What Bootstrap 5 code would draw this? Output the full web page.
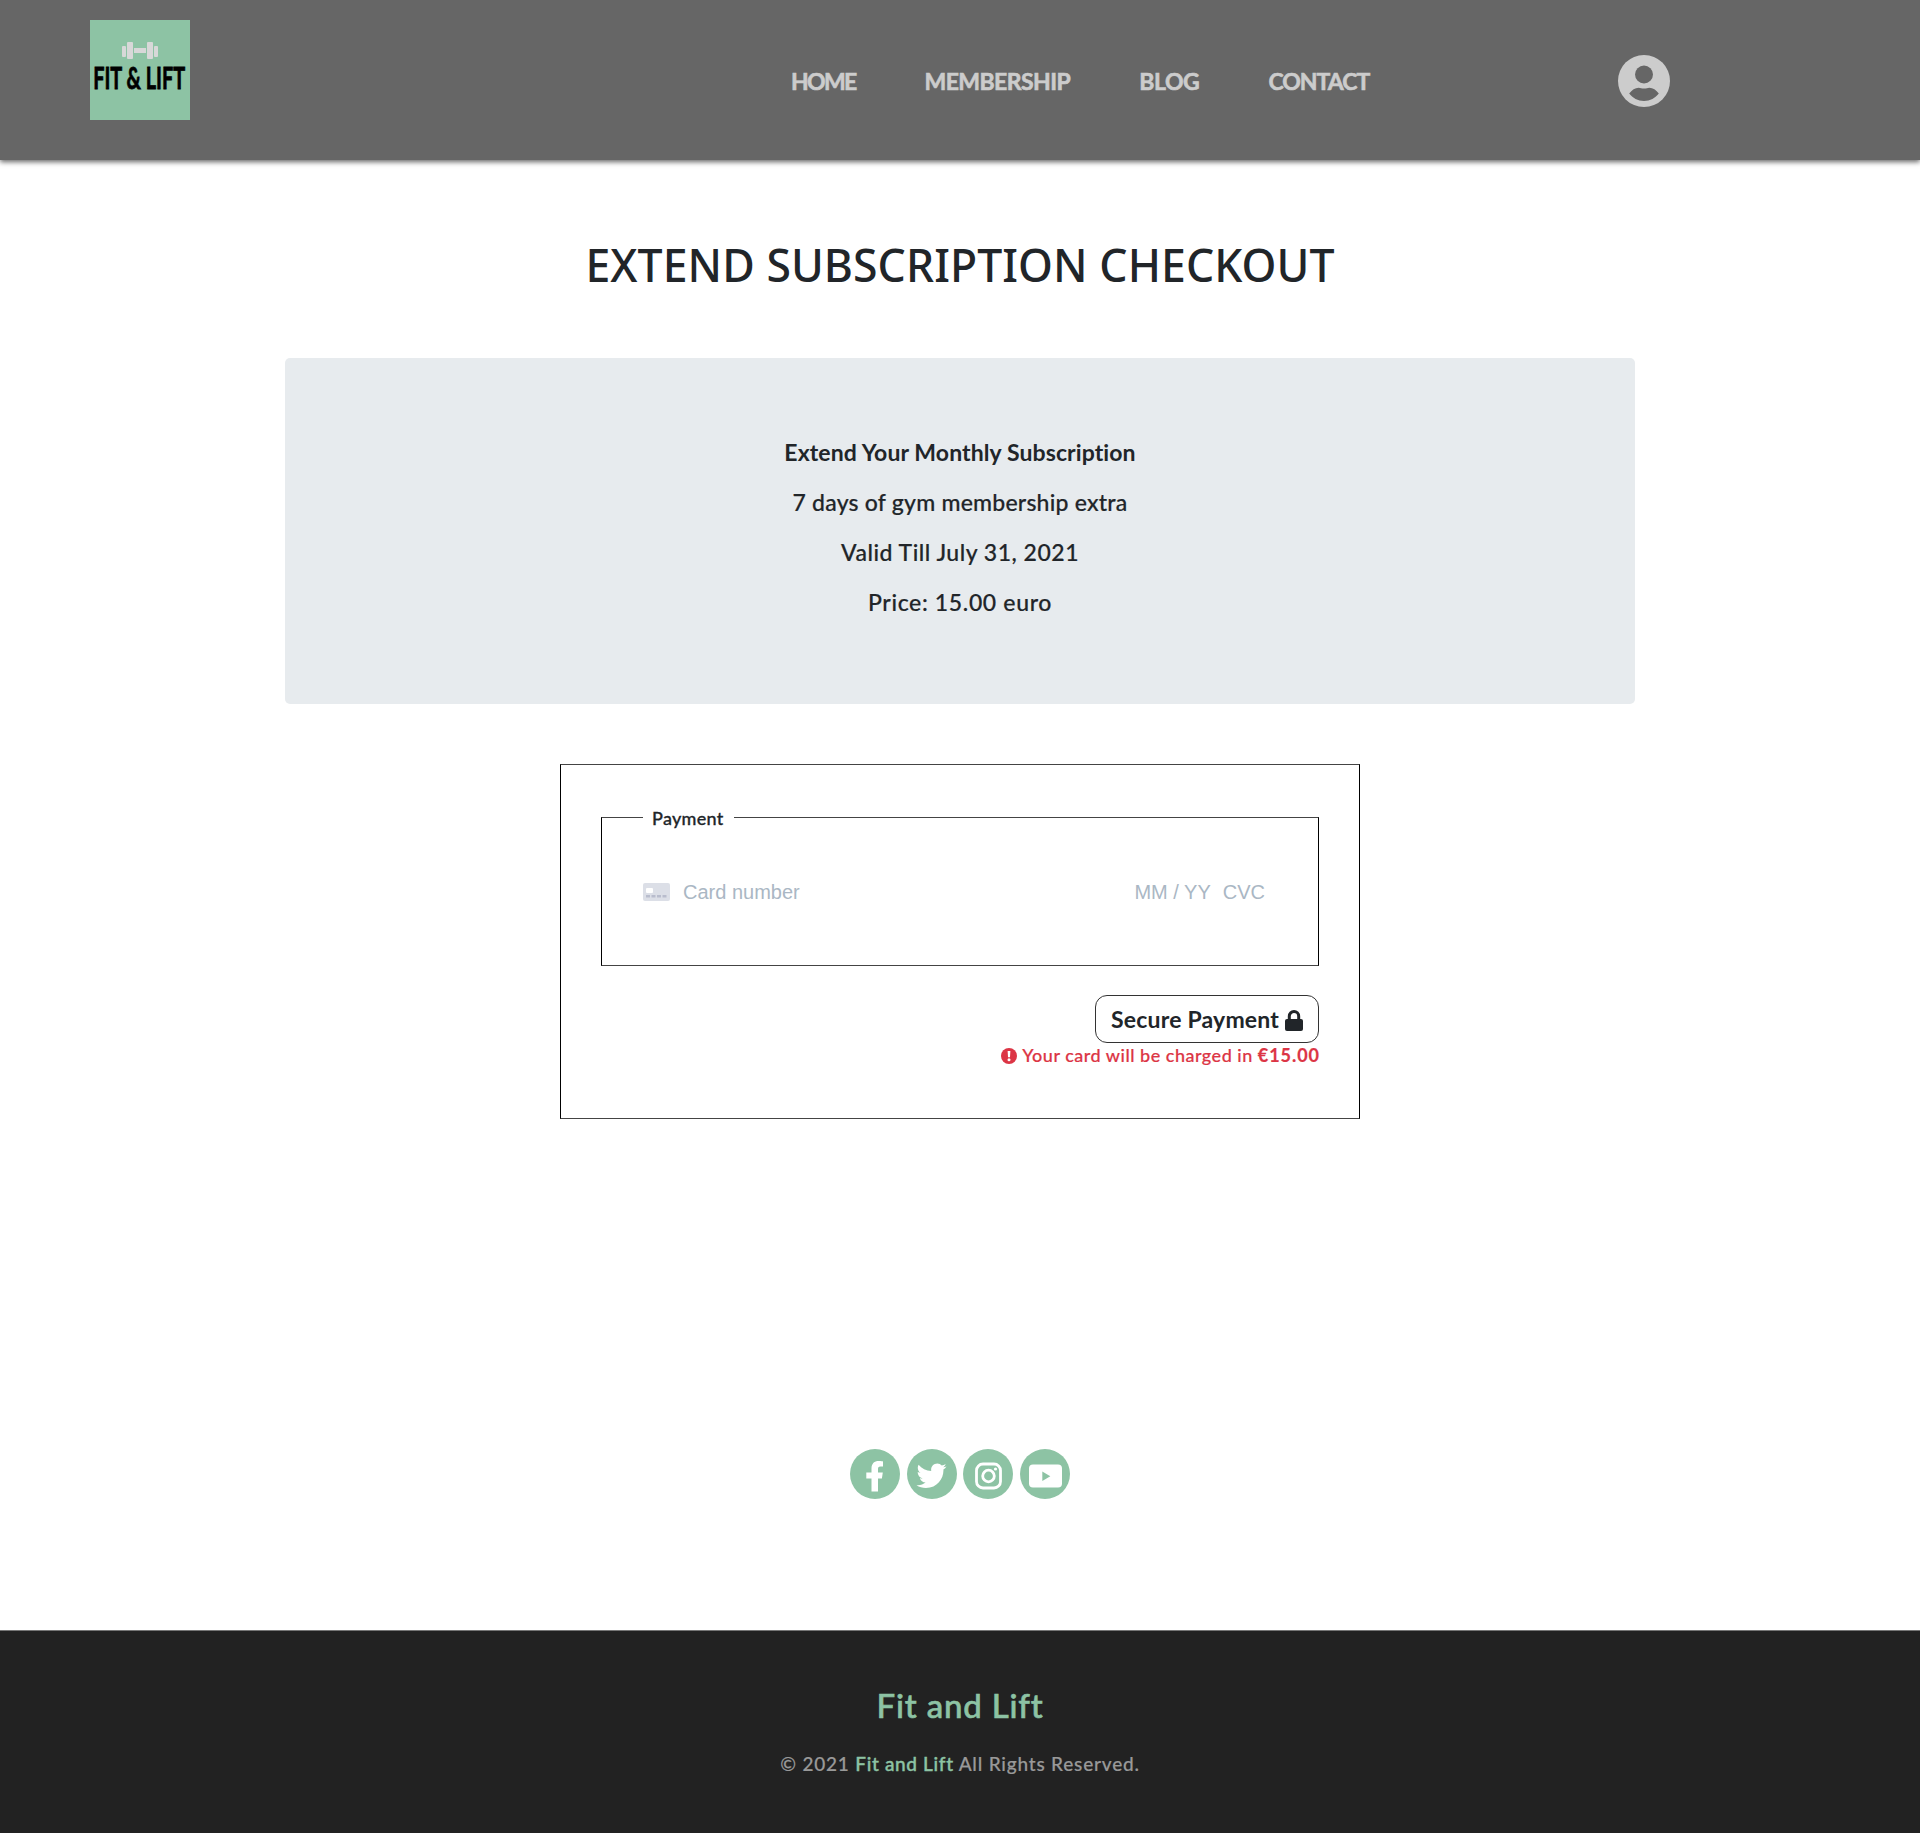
<!DOCTYPE html>
<html lang="en">
<head>
<meta charset="utf-8">
<meta name="viewport" content="width=device-width, initial-scale=1">
<title>Fit and Lift - Checkout</title>
<link rel="stylesheet" href="https://cdn.jsdelivr.net/npm/bootstrap@5.3.0/dist/css/bootstrap.min.css">
<style>
body{font-family:Lato,"Noto Sans",sans-serif;font-weight:500;color:#212529;background:#fff}
.site-header{height:160px;background:#666;box-shadow:0 2px 5px rgba(0,0,0,.6);padding-left:90px}
.site-logo{width:100px;height:100px;margin-top:20px}
.site-nav{margin-left:601px;gap:69px;padding-top:1px;font-size:23px;line-height:30px;font-weight:700;-webkit-text-stroke:.6px #ccc}
.site-nav a{color:#ccc;text-decoration:none;white-space:nowrap}
.nav-home{letter-spacing:-1.7px}.nav-member{letter-spacing:-.55px}.nav-blog{letter-spacing:-.4px}.nav-contact{letter-spacing:-1px}
.user-link{margin-left:180px;line-height:0}
.page-title{font:500 44.5px/53px "Noto Sans",sans-serif;letter-spacing:.08px;margin:78px 0 67px}
.summary{width:1350px;height:346px;padding-top:69px;background:#e7ebee;border-radius:5px;font-size:23px}
.summary p{line-height:50px;margin:0}
.summary p+p{-webkit-text-stroke:.2px #212529}
.sp-1{letter-spacing:.1px}.sp-2{letter-spacing:.22px}.sp-3{letter-spacing:.5px}.sp-4{letter-spacing:.65px}
.pay-form{width:800px;height:355px;margin-top:60px;padding:39px 40px 0;border:1px solid #000;border-top-color:#444;border-bottom-color:#444}
.pay-set{height:162px;padding:0 53px 0 41px;border:1px solid #000;border-top-color:#444;border-bottom-color:#444}
.pay-set legend{float:none;width:91px;height:26px;padding:2px 0 0 9px;margin:0;font-size:18px;line-height:24px;letter-spacing:.3px;white-space:nowrap;-webkit-text-stroke:.3px #212529}
.card-line{padding-top:50px;font:400 20px/24px "Liberation Sans",Arial,sans-serif;color:#aab7c4}
.card-label{margin-left:13px}
.pay-btn{width:224px;height:48px;margin-top:29px;padding:0 0 0 15px;border:1px solid #333;border-radius:12px;background:#fff;color:#212529;font-size:23px;font-weight:700;letter-spacing:.2px;line-height:46px;text-align:left}
.pay-btn svg{display:inline-block;vertical-align:-3px}
.charge-note{color:#dc3545;font-size:18px;line-height:24px;letter-spacing:.5px;-webkit-text-stroke:.2px #dc3545}
.charge-note svg{vertical-align:-2px;margin-right:1px}
.charge-note strong{letter-spacing:.95px;margin-right:-1px;font-weight:700}
.socials{margin-top:330px;gap:6.600px}
.site-footer{margin-top:131px;height:203px;padding-top:54px;background:#222;border-top:1px solid #777;color:#999}
.brand-name{font-size:33px;line-height:40px;font-weight:500;letter-spacing:.8px;color:#8dc3a4;-webkit-text-stroke:.6px #8dc3a4}
.rights{font-size:19px;line-height:24px;margin-top:27px;letter-spacing:.8px;-webkit-text-stroke:.2px}
.rights b{font-weight:500;color:#8dc3a4;letter-spacing:.65px;-webkit-text-stroke:.4px}
</style>
</head>
<body>
<header class="site-header d-flex align-items-start">
  <a href="#" class="site-logo d-block"><svg class="d-block overflow-visible" width="100" height="100" viewBox="0 0 100 100">
    <path fill="#8dc3a4" d="M0 0h100v100H0z"/>
    <g fill="#d8d8d8"><rect x="32" y="26" width="4" height="11" rx="1"/><rect x="37" y="22" width="6" height="17" rx="1"/><rect x="44" y="28" width="12" height="5"/><rect x="57" y="22" width="6" height="17" rx="1"/><rect x="64" y="26" width="4" height="11" rx="1"/></g>
    <text transform="translate(3.200 68.500) scale(.642 1)" font-family="Lato" font-weight="700" font-size="31" fill="#000" stroke="#000" stroke-width=".8">FIT &amp; LIFT</text>
  </svg></a>
  <nav class="site-nav d-flex align-items-center align-self-center">
    <a href="#" class="nav-home">HOME</a><a href="#" class="nav-member">MEMBERSHIP</a><a href="#" class="nav-blog">BLOG</a><a href="#" class="nav-contact">CONTACT</a>
    <a href="#" class="user-link" aria-label="Account"><svg width="52" height="52" viewBox="0 0 52 52"><circle cx="26" cy="26" r="26" fill="#ccc"/><circle cx="26" cy="19.500" r="9" fill="#666"/><path fill="#666" d="M11.200 38.500c2.500-3.600 6-5.800 9.500-5.800 1.800 0 2.800.9 5.300.9s3.500-.9 5.300-.9c3.500 0 7 2.200 9.500 5.800C37.500 43 32 46 26 46s-11.500-3-14.800-7.500z"/></svg></a>
  </nav>
</header>
<main class="d-flex flex-column align-items-center">
  <h1 class="page-title text-center">EXTEND SUBSCRIPTION CHECKOUT</h1>
  <section class="summary text-center">
    <p class="fw-bold sp-1">Extend Your Monthly Subscription</p>
    <p class="sp-2">7 days of gym membership extra</p>
    <p class="sp-3">Valid Till July 31, 2021</p>
    <p class="sp-4">Price: 15.00 euro</p>
  </section>
  <form class="pay-form d-flex flex-column">
    <fieldset class="pay-set">
      <legend>Payment</legend>
      <div class="card-line d-flex align-items-center">
        <svg width="27" height="18" viewBox="0 0 27 18"><rect width="27" height="18" rx="2" fill="#dcdfe7"/><rect x="3" y="5" width="7" height="5" rx="1" fill="#fff"/><path stroke="#b9bdcd" stroke-width="2.500" stroke-dasharray="4 1.500" d="M3 13.300h21.500"/></svg>
        <span class="card-label">Card number</span>
        <span class="ms-auto">MM / YY</span><span class="ms-2 ps-1">CVC</span>
      </div>
    </fieldset>
    <button type="button" class="pay-btn align-self-end">Secure Payment <svg width="18" height="21" viewBox="0 0 18 21"><rect y="9" width="18" height="12" rx="2" fill="#212529"/><path fill="none" stroke="#212529" stroke-width="3" d="M4.300 10V6.200a4.700 4.700 0 0 1 9.400 0V10"/></svg></button>
    <div class="charge-note align-self-end text-nowrap"><svg width="16" height="16" viewBox="0 0 16 16"><circle cx="8" cy="8" r="8" fill="#dc3545"/><path fill="#fff" d="M6.600 3h2.800L9 9.200H7z"/><circle cx="8" cy="11.700" r="1.500" fill="#fff"/></svg> Your card will be charged in <strong>€15.00</strong></div>
  </form>
  <div class="socials d-flex">
    <svg width="50" height="50" viewBox="0 0 50 50"><circle cx="25" cy="25" r="25" fill="#8dc3a4"/><path fill="#fff" d="M21.500 42.500V29.500H16.300V23.500h5.200v-4.200c0-4.800 2.900-7.300 7.200-7.300 2 0 4.300.4 4.300.4v5.100h-2.500c-2.200 0-2.500 1.300-2.500 2.600v3.400h4.800l-.9 6h-3.900v13z"/></svg>
    <svg width="50" height="50" viewBox="0 0 50 50"><circle cx="25" cy="25" r="25" fill="#8dc3a4"/><path fill="#fff" transform="translate(9.500 11.700) scale(.0586)" d="M459.370 151.716c.325 4.548.325 9.097.325 13.645 0 138.720-105.583 298.558-298.558 298.558-59.452 0-114.680-17.219-161.137-47.106 8.447.974 16.568 1.299 25.340 1.299 49.055 0 94.213-16.568 130.274-44.832-46.132-.975-84.792-31.188-98.112-72.772 6.498.974 12.995 1.624 19.818 1.624 9.421 0 18.843-1.300 27.614-3.573-48.081-9.747-84.143-51.980-84.143-102.985v-1.299c13.969 7.797 30.214 12.670 47.431 13.319-28.264-18.843-46.781-51.005-46.781-87.391 0-19.492 5.197-37.360 14.294-52.954 51.655 63.675 129.300 105.258 216.365 109.807-1.624-7.797-2.599-15.918-2.599-24.040 0-57.828 46.782-104.934 104.934-104.934 30.213 0 57.502 12.670 76.670 33.137 23.715-4.548 46.456-13.320 66.599-25.340-7.798 24.366-24.366 44.833-46.132 57.827 21.117-2.273 41.584-8.122 60.426-16.243-14.292 20.791-32.161 39.308-52.628 54.253z"/></svg>
    <svg width="50" height="50" viewBox="0 0 50 50"><circle cx="25" cy="25" r="25" fill="#8dc3a4"/><g transform="translate(.5 2)" fill="none" stroke="#fff" stroke-width="2.800"><rect x="13" y="13" width="24" height="24" rx="6.500"/><circle cx="25" cy="25" r="5.800"/><circle cx="32" cy="18" r="1.600" fill="#fff" stroke="none"/></g></svg>
    <svg width="50" height="50" viewBox="0 0 50 50"><circle cx="25" cy="25" r="25" fill="#8dc3a4"/><rect x="9" y="15.500" width="33" height="23" rx="4" fill="#fff"/><path fill="#8dc3a4" d="M22.300 22.500l8 4.700-8 4.700z"/></svg>
  </div>
</main>
<footer class="site-footer text-center">
  <div class="brand-name">Fit and Lift</div>
  <div class="rights">© 2021 <b>Fit and Lift</b> All Rights Reserved.</div>
</footer>
<script src="https://cdn.jsdelivr.net/npm/bootstrap@5.3.0/dist/js/bootstrap.bundle.min.js"></script>
</body>
</html>
